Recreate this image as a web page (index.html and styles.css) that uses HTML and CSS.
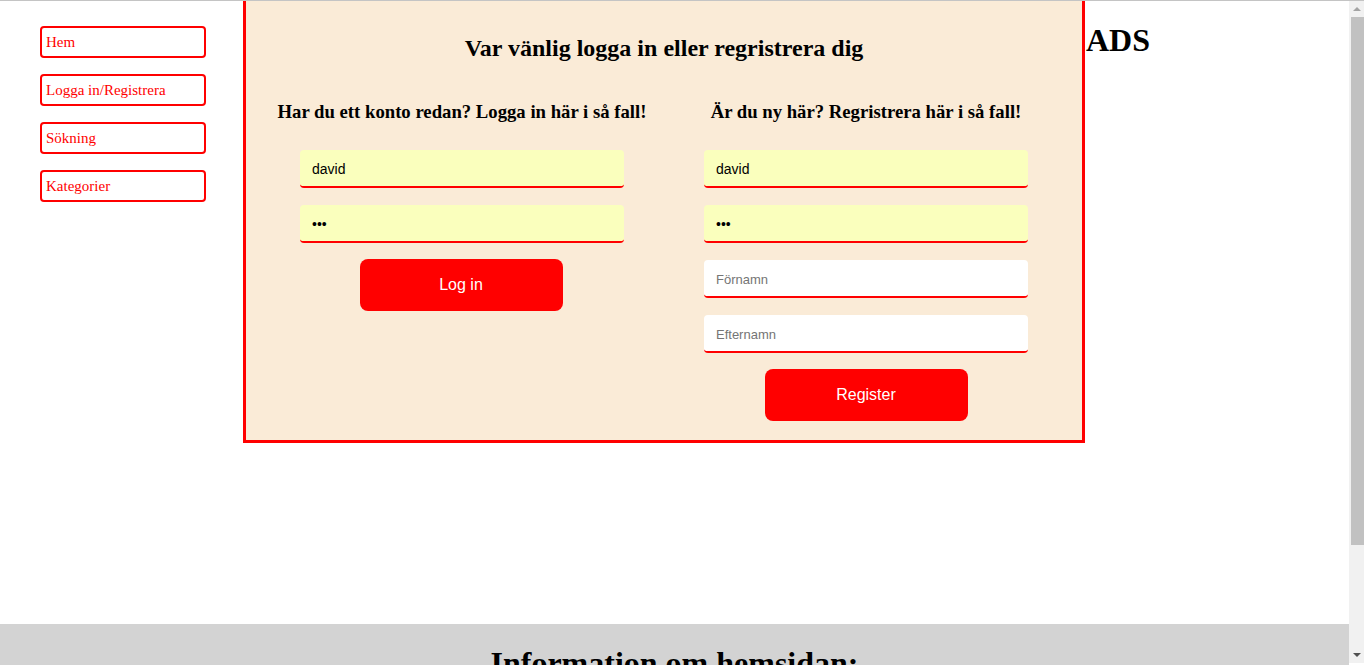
FILE: index.html
```html
<!DOCTYPE html>
<html lang="sv">
<head>
<meta charset="utf-8">
<title>Logga in / Registrera</title>
<link rel="stylesheet" href="styles.css">
</head>
<body>
<div class="page">
  <nav class="sidenav">
    <a class="navlink" href="#">Hem</a>
    <a class="navlink" href="#">Logga in/Registrera</a>
    <a class="navlink" href="#">Sökning</a>
    <a class="navlink" href="#">Kategorier</a>
  </nav>
  <main class="panel">
    <h2 class="panel-title">Var vänlig logga in eller regristrera dig</h2>
    <div class="columns">
      <form class="col">
        <h3 class="col-title">Har du ett konto redan? Logga in här i så fall!</h3>
        <input class="field filled" type="text" value="david">
        <input class="field filled" type="password" value="abc">
        <button class="btn btn-login" type="button">Log in</button>
      </form>
      <form class="col">
        <h3 class="col-title">Är du ny här? Regristrera här i så fall!</h3>
        <input class="field filled" type="text" value="david">
        <input class="field filled" type="password" value="abc">
        <input class="field" type="text" placeholder="Förnamn">
        <input class="field" type="text" placeholder="Efternamn">
        <button class="btn" type="button">Register</button>
      </form>
    </div>
  </main>
  <aside class="ads">
    <h1 class="ads-title">ADS</h1>
  </aside>
</div>
<footer class="info">
  <h1 class="info-title">Information om hemsidan:</h1>
</footer>
<div class="scrollbar" aria-hidden="true">
  <span class="sb-arrow sb-up"></span>
  <span class="sb-thumb"></span>
  <span class="sb-arrow sb-down"></span>
</div>
</body>
</html>
```
FILE: styles.css
```css
html {
  border-top: 1px solid #c4c4c4;
}
body {
  margin: 0 15px 0 0;
  font-family: "Liberation Serif", "Times New Roman", serif;
  color: #000;
  background: #fff;
}
.page {
  display: flex;
  align-items: flex-start;
}
.sidenav {
  display: flex;
  flex-direction: column;
  gap: 16px;
  padding: 25px 37px 0 40px;
}
.navlink {
  box-sizing: border-box;
  width: 166px;
  height: 32px;
  display: flex;
  align-items: center;
  padding: 0 4px;
  border: 2px solid #ff0000;
  border-radius: 4px;
  color: #ff0000;
  text-decoration: none;
  font-size: 15px;
  line-height: 17px;
}
.panel {
  box-sizing: border-box;
  width: 842px;
  padding: 33px 31px 19px;
  background: #faebd7;
  border: 3px solid #ff0000;
  border-top: 0;
}
.panel-title {
  margin: 0;
  font-size: 24px;
  line-height: 28px;
  text-align: center;
}
.columns {
  display: grid;
  grid-template-columns: 370px 370px;
  column-gap: 34px;
  align-items: start;
  margin-top: 39px;
}
.col {
  display: flex;
  flex-direction: column;
  align-items: center;
  margin: 0;
}
.col-title {
  margin: 0 0 27px;
  font-size: 18.72px;
  line-height: 22px;
  text-align: center;
  white-space: nowrap;
}
.field {
  box-sizing: border-box;
  width: 324px;
  height: 38px;
  margin: 0 0 17px;
  padding: 2px 12px 0;
  border: 0;
  border-bottom: 2px solid #ff0000;
  border-radius: 4px;
  background: #fff;
  font-family: "Liberation Sans", Arial, sans-serif;
  font-size: 14px;
  color: #000;
  outline: none;
}
.field::placeholder {
  color: #757575;
  font-size: 13px;
}
.field.filled {
  background: #faffbd;
}
.field:last-of-type {
  margin-bottom: 16px;
}
.btn {
  width: 203px;
  height: 52px;
  border: 0;
  border-radius: 8px;
  background: #ff0000;
  color: #fff;
  font-family: "Liberation Sans", Arial, sans-serif;
  font-size: 16px;
  cursor: pointer;
}
.btn-login {
  margin-right: 2px;
}
.ads {
  padding-left: 1px;
}
.ads-title {
  margin: 21px 0;
  font-size: 32px;
}
.info {
  margin-top: 181px;
  height: 168px;
  background: #d3d3d3;
  overflow: hidden;
}
.info-title {
  margin: 21px 0 0;
  font-size: 32px;
  text-align: center;
}
.scrollbar {
  position: fixed;
  top: 1px;
  right: 0;
  bottom: 2px;
  width: 15px;
  display: flex;
  flex-direction: column;
  background: #f1f1f1;
}
.sb-arrow {
  flex: 0 0 16px;
  display: flex;
  align-items: center;
  justify-content: center;
}
.sb-arrow::before {
  content: "";
  width: 0;
  height: 0;
  border-left: 4px solid transparent;
  border-right: 4px solid transparent;
}
.sb-up::before {
  border-bottom: 4px solid #a3a3a3;
}
.sb-down::before {
  border-top: 4px solid #505050;
}
.sb-thumb {
  flex: 0 0 528px;
  margin-left: 2px;
  background: #c1c1c1;
}
.sb-down {
  margin-top: auto;
}
```
